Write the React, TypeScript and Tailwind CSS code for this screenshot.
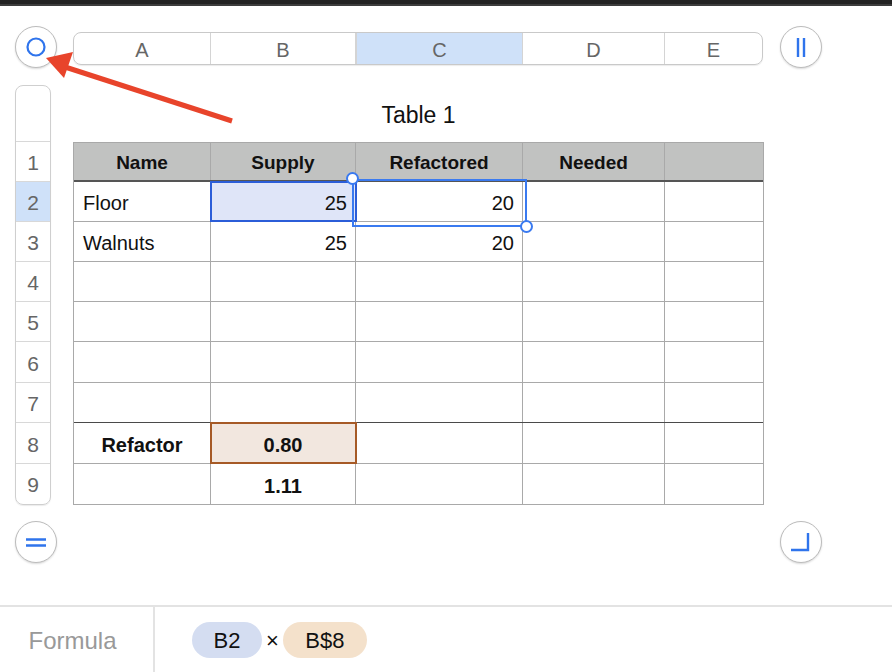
import React from 'react';

const cols = [
  { key: 'A', w: 'w-[137px]' },
  { key: 'B', w: 'w-[145px]' },
  { key: 'C', w: 'w-[167px]' },
  { key: 'D', w: 'w-[142px]' },
  { key: 'E', w: 'flex-1' },
];

type Cell = { text?: string; align?: 'left' | 'right' | 'center'; bold?: boolean; style?: string };

const rows: { h: string; dark?: boolean; cells: Cell[] }[] = [
  { h: 'h-[40px]', cells: [{ text: 'Floor' }, { text: '25', align: 'right', style: 'sel' }, { text: '20', align: 'right' }, {}, {}] },
  { h: 'h-[40px]', cells: [{ text: 'Walnuts' }, { text: '25', align: 'right' }, { text: '20', align: 'right' }, {}, {}] },
  { h: 'h-[40px]', cells: [{}, {}, {}, {}, {}] },
  { h: 'h-[40px]', cells: [{}, {}, {}, {}, {}] },
  { h: 'h-[41px]', cells: [{}, {}, {}, {}, {}] },
  { h: 'h-[40px]', dark: true, cells: [{}, {}, {}, {}, {}] },
  { h: 'h-[41px]', cells: [{ text: 'Refactor', align: 'center', bold: true }, { text: '0.80', align: 'center', bold: true, style: 'ref' }, {}, {}, {}] },
  { h: 'h-[40px]', cells: [{}, { text: '1.11', align: 'center', bold: true }, {}, {}, {}] },
];

function RoundButton({ children }: { children: React.ReactNode }) {
  return (
    <div className="w-[42px] h-[42px] rounded-full bg-white border border-[#bcbcbc] shadow-[0_1px_2px_rgba(0,0,0,0.15)] flex items-center justify-center shrink-0">
      {children}
    </div>
  );
}

export default function App() {
  return (
    <div className="relative w-[892px] h-[672px] bg-white overflow-hidden" style={{ fontFamily: '"Liberation Sans", Arial, sans-serif' }}>
      {/* window top edge */}
      <div className="h-[4px] bg-[#232323]" />
      <div className="h-[2px] bg-[#3c3c3c]" />

      {/* column header row */}
      <div className="flex items-start mt-[20px] pl-[15px]">
        <RoundButton>
          <svg width="22" height="22" viewBox="0 0 22 22">
            <circle cx="11" cy="11" r="8.5" fill="none" stroke="#2f74ec" strokeWidth="2.2" />
          </svg>
        </RoundButton>
        <div className="ml-[16px] mt-[6px] w-[690px] h-[33px] flex rounded-[8px] border border-[#c9c9c9] overflow-hidden shadow-[0_1px_1px_rgba(0,0,0,0.08)]">
          {cols.map((c, i) => (
            <div
              key={c.key}
              className={`${c.w} flex items-center justify-center pt-[3px] text-[20px] text-[#666] ${i < 4 ? 'border-r border-[#d4d4d4]' : ''} ${c.key === 'C' ? 'bg-[#cfe1f9] border-l border-[#b5c6dc]' : ''}`}
            >
              {c.key}
            </div>
          ))}
        </div>
        <div className="ml-[17px]">
          <RoundButton>
            <svg width="22" height="22" viewBox="0 0 22 22">
              <path d="M8 2v19M14 2v19" stroke="#2f74ec" strokeWidth="2.4" />
            </svg>
          </RoundButton>
        </div>
      </div>

      {/* sheet body */}
      <div className="flex mt-[17px] pl-[15px]">
        <div className="w-[36px] rounded-[8px] border border-[#cfcfcf] overflow-hidden shadow-[0_1px_1px_rgba(0,0,0,0.08)] text-[#666] text-[21px]">
          <div className="h-[56px] border-b border-[#d8d8d8]" />
          {['h-[40px]', 'h-[40px]', 'h-[40px]', 'h-[40px]', 'h-[40px]', 'h-[41px]', 'h-[40px]', 'h-[41px]', 'h-[39px]'].map((h, i) => (
            <div
              key={i}
              className={`${h} flex items-center justify-center pt-[3px] ${i < 8 ? 'border-b border-[#d8d8d8]' : ''} ${i === 1 ? 'bg-[#cfe1f9]' : ''}`}
            >
              {i + 1}
            </div>
          ))}
        </div>

        <div className="ml-[22px] w-[691px]">
          <div className="h-[57px] flex items-center justify-center pt-[3px] text-[23px] text-[#111]">Table 1</div>
          <div className="relative border-l border-r border-b border-[#a9a9a9] text-[20px] text-[#111]">
            {/* header */}
            <div className="h-[40px] flex bg-[#c1c2c1] border-t border-b-[2px] border-t-[#a9a9a9] border-b-[#555]">
              {['Name', 'Supply', 'Refactored', 'Needed', ''].map((t, i) => (
                <div key={i} className={`${cols[i].w} flex items-center justify-center pt-[3px] text-[19px] font-bold ${i < 4 ? 'border-r border-[#a9a9a9]' : ''}`}>
                  {t}
                </div>
              ))}
            </div>
            {rows.map((r, ri) => (
              <div key={ri} className={`${r.h} flex ${ri < rows.length - 1 ? (r.dark ? 'border-b border-[#4a4a4a]' : 'border-b border-[#a9a9a9]') : ''}`}>
                {r.cells.map((c, ci) => (
                  <div
                    key={ci}
                    className={`${cols[ci].w} flex items-center pt-[3px] ${ci < 4 ? 'border-r border-[#a9a9a9]' : ''} ${
                      c.align === 'right' ? 'justify-end pr-[8px]' : c.align === 'center' ? 'justify-center' : 'pl-[9px]'
                    } ${c.bold ? 'font-bold' : ''} ${
                      c.style === 'sel'
                        ? 'bg-[#dfe5f8] outline-2 outline-[#2b5dd8] -outline-offset-1'
                        : c.style === 'ref'
                        ? 'bg-[#f2e7df] outline-2 outline-[#a65a26] -outline-offset-1'
                        : ''
                    }`}
                  >
                    {c.text}
                  </div>
                ))}
              </div>
            ))}

            {/* C2 selection range */}
            <div className="absolute left-[278px] top-[37px] w-[175px] h-[48px] border-2 border-[#3a7af0] pointer-events-none" />
            <div className="absolute left-[272px] top-[30px] w-[13px] h-[13px] rounded-full bg-white border-2 border-[#3a7af0]" />
            <div className="absolute left-[446px] top-[78px] w-[13px] h-[13px] rounded-full bg-white border-2 border-[#3a7af0]" />
          </div>
        </div>
      </div>

      {/* bottom controls */}
      <div className="flex justify-between mt-[16px] pl-[15px] pr-[70px]">
        <RoundButton>
          <svg width="22" height="22" viewBox="0 0 22 22">
            <path d="M1 8.5h20M1 14.5h20" stroke="#2f74ec" strokeWidth="2.4" />
          </svg>
        </RoundButton>
        <RoundButton>
          <svg width="22" height="22" viewBox="0 0 22 22">
            <path d="M18 2v17H1" fill="none" stroke="#2f74ec" strokeWidth="2.4" />
          </svg>
        </RoundButton>
      </div>

      {/* formula bar */}
      <div className="absolute left-0 right-0 bottom-0 h-[67px] border-t-2 border-[#e3e3e3] flex">
        <div className="w-[155px] border-r-2 border-[#e3e3e3] flex items-center justify-center pr-[8px] pt-[3px] text-[24px] text-[#999]">Formula</div>
        <div className="flex items-center pl-[37px] text-[22px] text-[#111]">
          <span className="w-[70px] h-[36px] rounded-full bg-[#d4ddf1] flex items-center justify-center pt-[2px]">B2</span>
          <span className="mx-[4px] text-[22px] pt-[2px]">×</span>
          <span className="w-[84px] h-[36px] rounded-full bg-[#f4e1cb] flex items-center justify-center pt-[2px]">B$8</span>
        </div>
      </div>

      {/* annotation arrow */}
      <svg className="absolute left-0 top-0 pointer-events-none" width="892" height="672">
        <line x1="232" y1="121" x2="62" y2="66" stroke="#e8442b" strokeWidth="5" />
        <polygon points="46,58 73,52 64,78" fill="#e8442b" />
      </svg>
    </div>
  );
}
